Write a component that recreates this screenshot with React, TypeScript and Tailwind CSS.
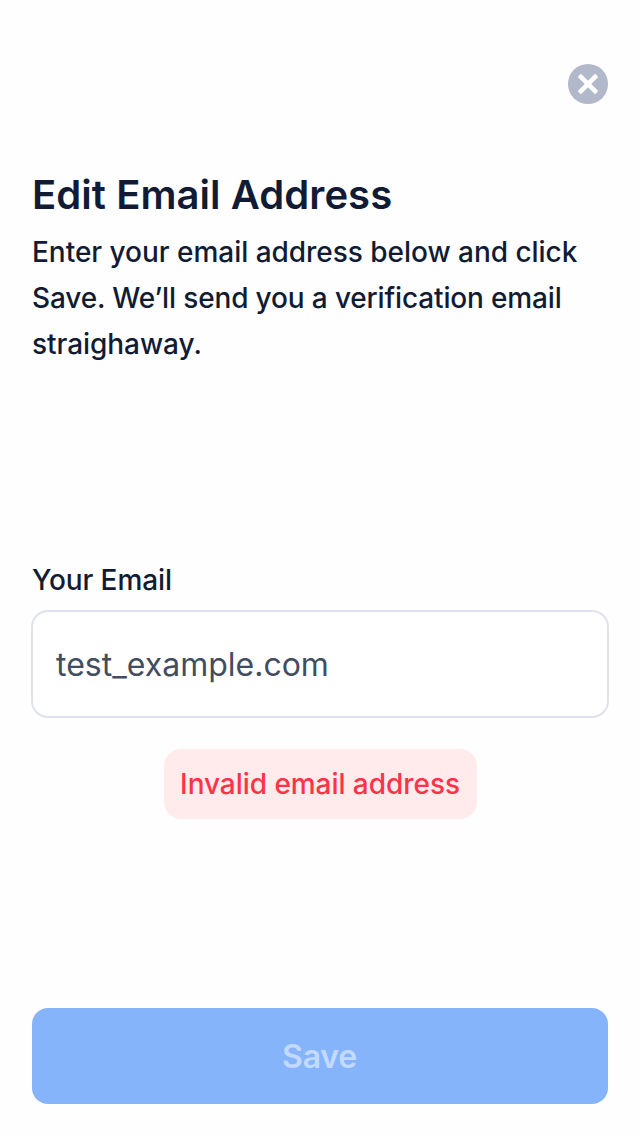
export default function App() {
  return (
    <main className="flex h-[1136px] w-[640px] flex-col bg-[#fefefe] px-8 pt-16 pb-8 font-['Inter',sans-serif] text-[#111c34]">
      <button aria-label="Close" className="size-10 self-end">
        <svg viewBox="0 0 40 40" className="size-10">
          <circle cx="20" cy="20" r="20" fill="#b0b8c9" />
          <g fill="#fff">
            <rect x="7.7" y="17.7" width="24.6" height="4.6" rx="0.9" transform="rotate(45 20 20)" />
            <rect x="7.7" y="17.7" width="24.6" height="4.6" rx="0.9" transform="rotate(-45 20 20)" />
          </g>
        </svg>
      </button>
      <h1 className="mt-[67px] text-[40px] leading-[48px] font-semibold tracking-[0.06px] whitespace-nowrap">Edit Email Address</h1>
      <p className="mt-[10px] text-[28px] leading-[46px] font-medium whitespace-nowrap">
        <span className="block tracking-[-0.03px]">Enter your email address below and click</span>
        <span className="block tracking-[-0.15px]">Save. We’ll send you a verification email</span>
        <span className="block tracking-[-0.05px]">straighaway.</span>
      </p>
      <label htmlFor="email" className="mt-[196px] text-[28px] leading-[34px] font-medium tracking-[-0.1px]">Your Email</label>
      <input id="email" defaultValue="test_example.com" className="-mx-px mt-[13px] h-[108px] rounded-[17px] border-2 border-[#dfe2ec] bg-white pt-px pr-6 pl-[23px] text-[32px] text-[#424d60] outline-none" />
      <div className="mt-[31px] flex h-[70px] w-[313px] items-center justify-center self-center rounded-[17px] bg-[#ffebeb] text-[28px] font-medium tracking-[-0.05px] whitespace-nowrap text-[#ff3347]">Invalid email address</div>
      <button disabled className="mt-auto h-24 rounded-2xl bg-[#86b4fa] pt-0.5 pr-px text-[32px] font-semibold tracking-[-0.2px] text-[#c3daff]">Save</button>
    </main>
  );
}
